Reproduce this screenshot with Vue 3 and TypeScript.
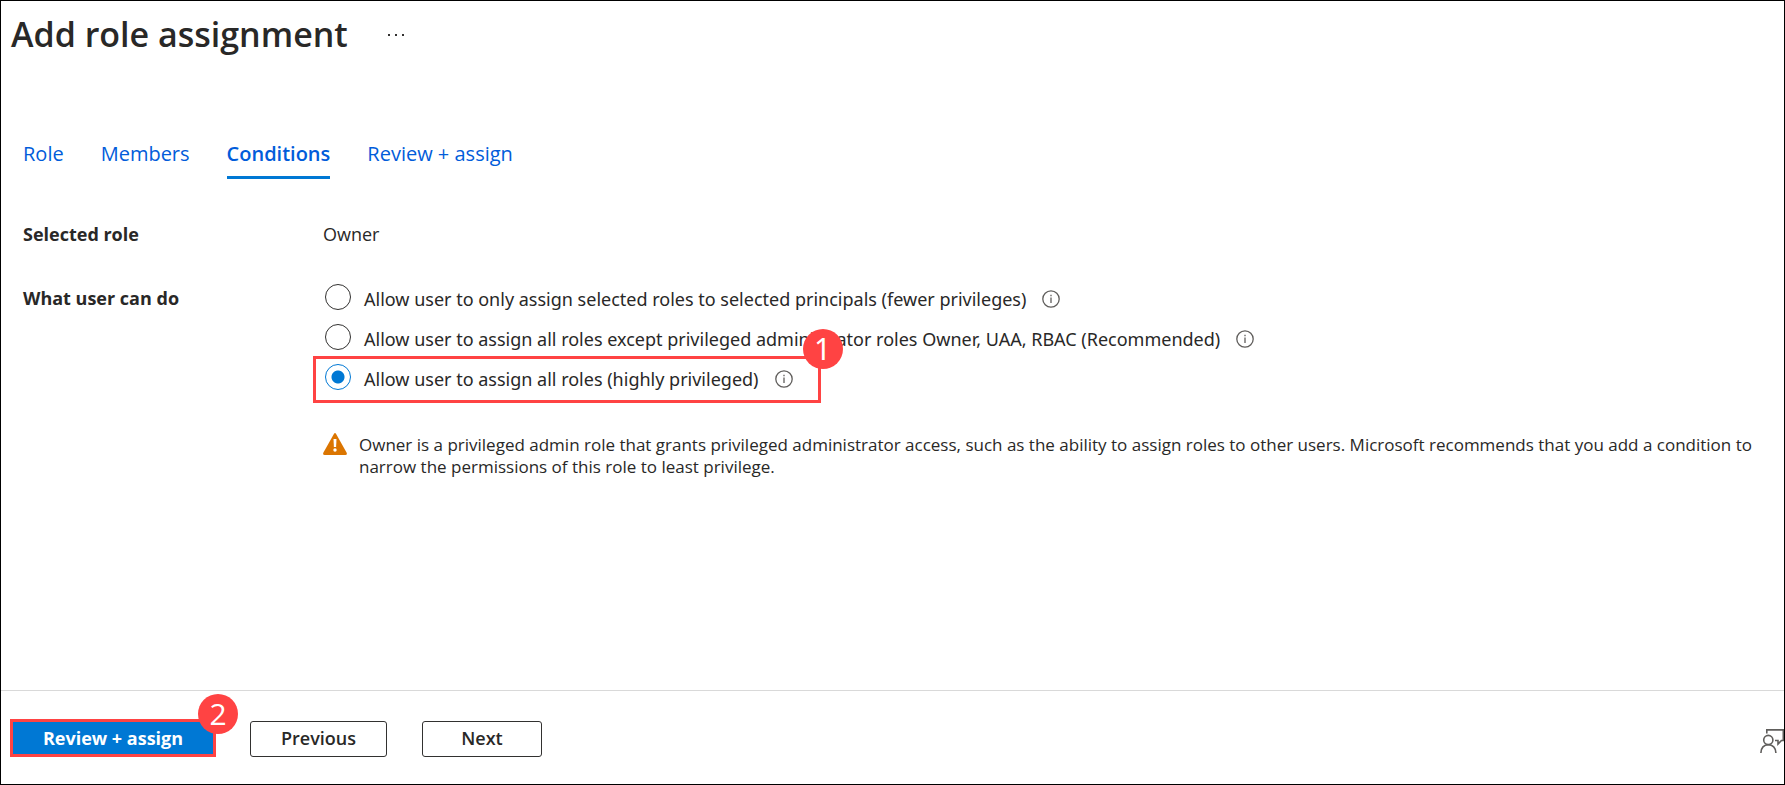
<script setup lang="ts">
import { ref } from 'vue'

interface Tab {
  id: string
  label: string
}

interface Option {
  id: string
  label: string
  step?: number
}

const tabs: Tab[] = [
  { id: 'role', label: 'Role' },
  { id: 'members', label: 'Members' },
  { id: 'conditions', label: 'Conditions' },
  { id: 'review', label: 'Review + assign' },
]

const options: Option[] = [
  {
    id: 'constrained',
    label: 'Allow user to only assign selected roles to selected principals (fewer privileges)',
  },
  {
    id: 'except-privileged',
    label:
      'Allow user to assign all roles except privileged administrator roles Owner, UAA, RBAC (Recommended)',
  },
  { id: 'all', label: 'Allow user to assign all roles (highly privileged)', step: 1 },
]

const activeTab = ref('conditions')
const selected = ref('all')
</script>

<template>
  <main class="page">
    <header class="header">
      <h1>Add role assignment</h1>
      <button class="icon-button" type="button" aria-label="More actions">
        <svg width="18" height="6" viewBox="0 0 18 6" fill="#323130">
          <rect x="1" y="3" width="2" height="2" />
          <rect x="8" y="3" width="2" height="2" />
          <rect x="15" y="3" width="2" height="2" />
        </svg>
      </button>
    </header>

    <nav class="tabs" role="tablist">
      <button
        v-for="tab in tabs"
        :key="tab.id"
        class="tab"
        :class="{ active: tab.id === activeTab }"
        type="button"
        role="tab"
        :aria-selected="tab.id === activeTab"
        @click="activeTab = tab.id"
      >
        {{ tab.label }}
      </button>
    </nav>

    <section class="form">
      <div class="field">
        <span class="name">Selected role</span>
        <span class="value">Owner</span>
      </div>

      <div class="field">
        <span id="permission-label" class="name">What user can do</span>
        <div class="options" role="radiogroup" aria-labelledby="permission-label">
          <div
            v-for="option in options"
            :key="option.id"
            class="option"
            :class="{ marked: option.step }"
          >
            <input :id="option.id" v-model="selected" type="radio" name="permission" :value="option.id" />
            <label :for="option.id">{{ option.label }}</label>
            <button class="icon-button" type="button" aria-label="More information">
              <svg width="18" height="18" viewBox="0 0 18 18">
                <circle cx="9" cy="9" r="8.2" fill="none" stroke="#605e5c" stroke-width="1.3" />
                <path d="M9 7.5V13M9 4.8V6.2" stroke="#605e5c" stroke-width="1.3" />
              </svg>
            </button>
            <span v-if="option.step" class="badge">{{ option.step }}</span>
          </div>
        </div>
      </div>

      <div class="warning" role="status">
        <svg width="24" height="22" viewBox="0 0 24 22" aria-hidden="true">
          <path
            d="M10.9 0.9Q12 -0.7 13.1 0.9L23.7 19.8Q24.4 21.8 22.4 22H1.6Q-0.4 21.8 0.3 19.8Z"
            fill="#db7500"
          />
          <path d="M10.5 6H13.5L13.1 14H10.9Z" fill="#fff" />
          <circle cx="12" cy="17" r="1.7" fill="#fff" />
        </svg>
        <p>
          Owner is a privileged admin role that grants privileged administrator access, such as the
          ability to assign roles to other users. Microsoft recommends that you add a condition to
          narrow the permissions of this role to least privilege.
        </p>
      </div>
    </section>

    <footer class="footer">
      <div class="primary-wrap">
        <button class="button primary" type="button">Review + assign</button>
        <span class="badge">2</span>
      </div>
      <button class="button previous" type="button">Previous</button>
      <button class="button next" type="button">Next</button>
      <button class="icon-button feedback" type="button" aria-label="Give feedback">
        <svg width="24" height="24" viewBox="0 0 24 24" fill="none" stroke="#605e5c" stroke-width="1.6">
          <circle cx="8.3" cy="11" r="4.6" />
          <path d="M0.9 24C0.9 18.8 4 15.7 8.3 15.7S15.9 18.8 15.9 24" />
          <path d="M6.8 4.5V0.9H23.3V11.5H21.5L18 15V11.5H15" />
        </svg>
      </button>
    </footer>
  </main>
</template>

<style>
body {
  margin: 0;
}
</style>

<style scoped>
.page {
  box-sizing: border-box;
  min-height: 100vh;
  display: flex;
  flex-direction: column;
  border: 1px solid #000;
  background: #fff;
  color: #292827;
  font-family: 'Open Sans', 'Noto Sans', sans-serif;
  font-size: 18px;
  line-height: 24px;
}

button {
  font: inherit;
  cursor: pointer;
}

.header {
  display: flex;
  align-items: center;
  gap: 39px;
  padding: 11px 10px 0;
}

h1 {
  margin: 0;
  font-size: 34px;
  line-height: 44px;
  font-weight: 600;
}

.icon-button {
  display: flex;
  padding: 0;
  border: 0;
  background: none;
}

.tabs {
  display: flex;
  gap: 37px;
  margin-top: 81px;
  padding: 0 22px;
}

.tab {
  padding: 4px 0 9px;
  border: 0;
  border-bottom: 3px solid transparent;
  background: none;
  color: #015cda;
  font-size: 20px;
  line-height: 26px;
}

.tab.active {
  border-bottom-color: #0078d4;
  font-weight: 600;
}

.form {
  flex: 1;
  padding: 43px 22px 24px;
}

.field {
  display: flex;
  margin-bottom: 40px;
}

.name {
  flex: none;
  width: 300px;
  font-weight: 700;
}

.options {
  display: flex;
  flex-direction: column;
  align-items: flex-start;
  margin: -7px 0 -6px;
  font-family: 'Noto Sans', 'Open Sans', sans-serif;
}

.option {
  position: relative;
  display: flex;
  align-items: center;
  height: 40px;
}

.option label {
  padding: 0 16px 0 13px;
}

input[type='radio'] {
  appearance: none;
  box-sizing: border-box;
  width: 26px;
  height: 26px;
  margin: 0 0 4px 2px;
  border: 1px solid #323130;
  border-radius: 50%;
}

input[type='radio']:checked {
  border-color: #0078d4;
  background: radial-gradient(circle, #0078d4 6px, transparent 7px);
}

.marked::after {
  content: '';
  position: absolute;
  inset: -3px -28px -4px -10px;
  border: 3px solid #ff4343;
  pointer-events: none;
}

.badge {
  position: absolute;
  z-index: 1;
  width: 40px;
  height: 40px;
  border-radius: 50%;
  background: #ff4343;
  color: #fff;
  font-size: 30px;
  line-height: 40px;
  text-align: center;
}

.marked .badge {
  top: -30px;
  right: -50px;
}

.warning {
  display: flex;
  align-items: flex-start;
  gap: 12px;
  margin-left: 300px;
}

.warning svg {
  flex: none;
}

.warning p {
  margin: 0;
  padding-top: 1px;
  font-size: 17px;
  line-height: 22px;
}

.footer {
  display: flex;
  align-items: flex-end;
  padding: 28px 0 27px 9px;
  border-top: 1px solid #d9d9d9;
}

.button {
  box-sizing: border-box;
  height: 36px;
  padding: 0 0 2px;
  border: 1px solid #323130;
  border-radius: 3px;
  background: #fff;
  color: #292827;
  font-weight: 600;
}

.primary-wrap {
  position: relative;
  display: flex;
}

.primary {
  width: 206px;
  height: 38px;
  padding: 0;
  border: 3px solid #ff4343;
  border-radius: 0;
  background: #0078d4;
  color: #fff;
  font-weight: 700;
}

.primary-wrap .badge {
  top: -25px;
  right: -22px;
}

.previous {
  width: 137px;
  margin-left: 34px;
}

.next {
  width: 120px;
  margin-left: 35px;
}

.feedback {
  margin: 0 0 4px auto;
}
</style>
